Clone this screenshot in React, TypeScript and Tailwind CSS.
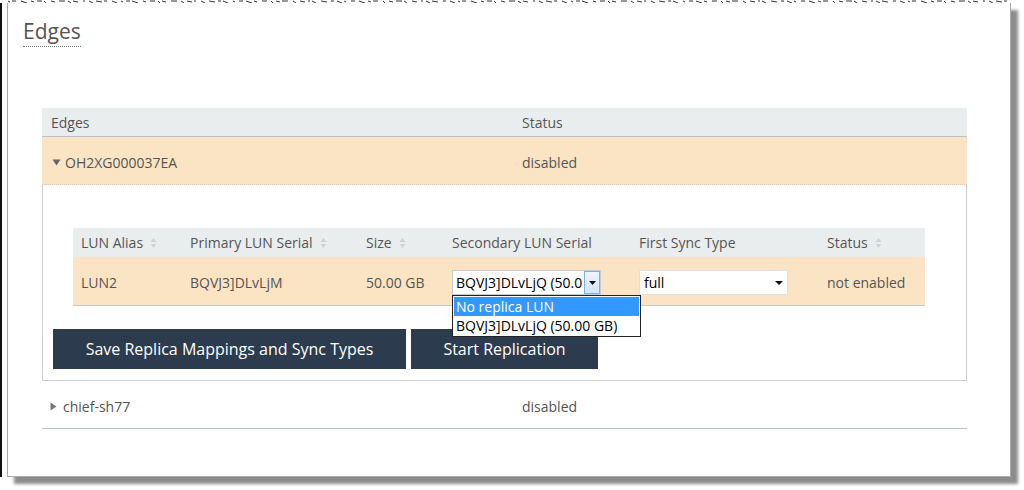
import React from "react"

const font = { fontFamily: '"Open Sans", "Noto Sans", sans-serif' }

function SortIcon() {
  return (
    <svg width="7" height="12" viewBox="0 0 7 12" className="ml-[7px] inline-block">
      <path d="M3.5 1 L6.5 5 L0.5 5 Z" fill="#cfd3d6" />
      <path d="M3.5 11 L6.5 7 L0.5 7 Z" fill="#cfd3d6" />
    </svg>
  )
}

function TornEdge() {
  // ragged top edge of the clipped screenshot
  const segs: React.ReactNode[] = []
  let x = 8
  let i = 0
  while (x < 1010) {
    const len = 2 + ((i * 7) % 5)
    const y1 = 1 + ((i * 3) % 3)
    const y2 = 1 + ((i * 5 + 1) % 3)
    segs.push(<line key={i} x1={x} y1={y1} x2={x + len} y2={y2} stroke="#333" strokeWidth="1" />)
    x += len + 2 + ((i * 11) % 4)
    i++
  }
  return (
    <svg width="1012" height="4" className="absolute left-0 top-0">
      {segs}
    </svg>
  )
}

function Cursor() {
  return (
    <svg width="14" height="20" viewBox="0 0 14 20" className="absolute left-[623px] top-[304px]">
      <path d="M1 1 L1 15 L4.5 11.5 L7 17.5 L9 16.6 L6.6 10.8 L11.5 10.8 Z" fill="#fff" stroke="#222" strokeWidth="1" strokeLinejoin="round" />
    </svg>
  )
}

export default function App() {
  return (
    <div className="relative w-[1024px] h-[490px] bg-white overflow-hidden text-[#555]" style={font}>
      <TornEdge />
      <div className="absolute left-0 top-[3px] w-[2px] h-[474px] bg-[#111]" />
      <div className="absolute left-[7px] top-[3px] w-[1004px] h-[474px] border-x border-b border-[#aaa] bg-white shadow-[7px_7px_3px_rgba(0,0,0,0.45)]">
        <div className="pl-[15px] pt-[14px]">
          <h1 className="inline-block text-[21px] leading-[29px] text-[#555] border-b border-dotted border-[#777] font-normal">Edges</h1>
        </div>

        <div className="ml-[34px] mt-[61px] w-[925px] text-[14px]">
          {/* header */}
          <div className="flex h-[29px] items-center bg-[#e9edee] border-b border-[#b9c2ca]">
            <div className="w-[480px] pl-[9px]">Edges</div>
            <div>Status</div>
          </div>

          {/* expanded edge */}
          <div className="flex h-[48px] pt-[3px] items-center bg-[#fbe4c3] border-b border-dotted border-[#d8c8ac]">
            <div className="w-[480px] pl-[10px] flex items-center">
              <svg width="9" height="7" viewBox="0 0 9 7" className="mr-[4px]">
                <path d="M0.5 0.5 L8.5 0.5 L4.5 6.5 Z" fill="#666" />
              </svg>
              OH2XG000037EA
            </div>
            <div>disabled</div>
          </div>

          <div className="relative border-x border-b border-[#ccc] h-[196px] pt-[43px]">
            <div className="ml-[30px] w-[852px]">
              <div className="flex h-[29px] items-center bg-[#e9edee]">
                <div className="w-[109px] pl-[8px] flex items-center">LUN Alias<SortIcon /></div>
                <div className="w-[176px] pl-[8px] flex items-center">Primary LUN Serial<SortIcon /></div>
                <div className="w-[86px] pl-[8px] flex items-center">Size<SortIcon /></div>
                <div className="w-[187px] pl-[8px]">Secondary LUN Serial</div>
                <div className="w-[188px] pl-[8px]">First Sync Type</div>
                <div className="flex-1 pl-[8px] flex items-center">Status<SortIcon /></div>
              </div>
              <div className="flex h-[49px] pt-[3px] items-center bg-[#fbe4c3] border-b border-[#c8c8c8]">
                <div className="w-[109px] pl-[8px]">LUN2</div>
                <div className="w-[176px] pl-[8px]">BQVJ3]DLvLjM</div>
                <div className="w-[86px] pl-[8px]">50.00 GB</div>
                <div className="w-[187px] pl-[8px] relative">
                  <div className="flex w-[149px] h-[25px] bg-white border border-[#c5cbd0]">
                    <div className="flex-1 overflow-hidden whitespace-nowrap pl-[3px] leading-[23px] text-black">BQVJ3]DLvLjQ (50.0</div>
                    <div className="w-[16px] h-[23px] border border-[#7eb0e3] bg-gradient-to-b from-[#eef5fd] to-[#d3e5f8] flex items-center justify-center">
                      <svg width="7" height="4" viewBox="0 0 7 4"><path d="M0 0 L7 0 L3.5 4 Z" fill="#111" /></svg>
                    </div>
                  </div>
                  <div className="absolute left-[8px] top-[25px] w-[189px] border border-[#222] bg-white text-[14px] leading-[19px] p-[1px] z-10">
                    <div className="bg-[#3399ff] text-white pl-[2px]">No replica LUN</div>
                    <div className="text-black pl-[2px]">BQVJ3]DLvLjQ (50.00 GB)</div>
                  </div>
                </div>
                <div className="w-[188px] pl-[8px]">
                  <div className="flex items-center w-[149px] h-[25px] bg-white border border-[#dde1e4] pl-[4px] pr-[4px] text-black">
                    <span className="flex-1">full</span>
                    <svg width="8" height="4" viewBox="0 0 8 4"><path d="M0 0 L8 0 L4 4 Z" fill="#111" /></svg>
                  </div>
                </div>
                <div className="flex-1 pl-[8px]">not enabled</div>
              </div>
            </div>

            <div className="flex gap-[5px] ml-[10px] mt-[23px]">
              <button className="w-[353px] h-[40px] bg-[#2c3b4d] text-white text-[16px]">Save Replica Mappings and Sync Types</button>
              <button className="w-[187px] h-[40px] bg-[#2c3b4d] text-white text-[16px]">Start Replication</button>
            </div>
          </div>

          {/* collapsed edge */}
          <div className="flex h-[48px] pt-[3px] items-center border-b border-[#bcc3c9]">
            <div className="w-[480px] pl-[8px] flex items-center">
              <svg width="7" height="9" viewBox="0 0 7 9" className="mr-[6px]">
                <path d="M0.5 0.5 L6.5 4.5 L0.5 8.5 Z" fill="#777" />
              </svg>
              chief-sh77
            </div>
            <div>disabled</div>
          </div>
        </div>
      </div>
      <Cursor />
    </div>
  )
}
